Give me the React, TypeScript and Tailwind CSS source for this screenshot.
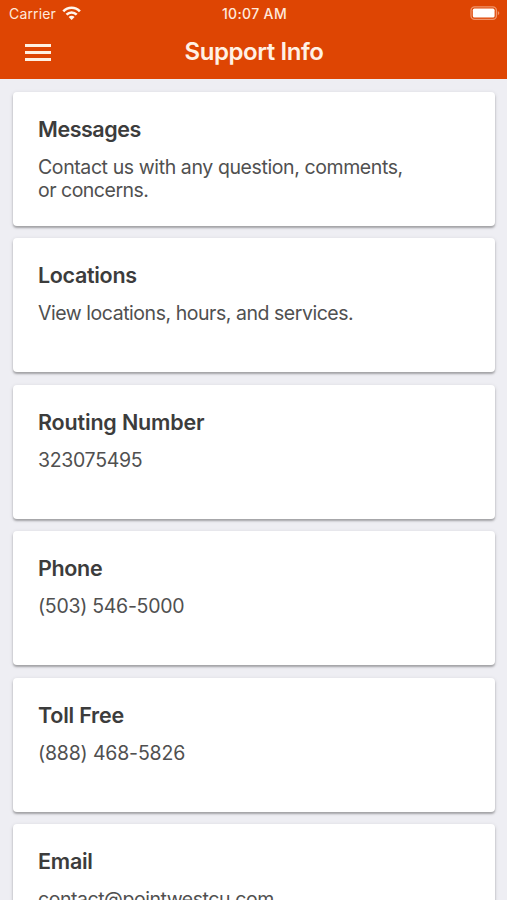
type Line = { text: string; className: string };
type Item = { title: string; titleClass: string; lines: Line[] };

const items: Item[] = [
  {
    title: "Messages",
    titleClass: "tracking-[-0.45px]",
    lines: [
      { text: "Contact us with any question, comments,", className: "tracking-[-0.4px]" },
      { text: "or concerns.", className: "tracking-[-0.5px]" },
    ],
  },
  { title: "Locations", titleClass: "tracking-[-0.32px]", lines: [{ text: "View locations, hours, and services.", className: "tracking-[-0.46px]" }] },
  { title: "Routing Number", titleClass: "tracking-[-0.17px]", lines: [{ text: "323075495", className: "tracking-[-0.32px]" }] },
  { title: "Phone", titleClass: "tracking-[-0.35px]", lines: [{ text: "(503) 546-5000", className: "tracking-[-0.28px]" }] },
  { title: "Toll Free", titleClass: "tracking-[-0.22px]", lines: [{ text: "(888) 468-5826", className: "tracking-[-0.17px]" }] },
  { title: "Email", titleClass: "tracking-[-0.25px]", lines: [{ text: "contact@pointwestcu.com", className: "tracking-[-0.46px]" }] },
];

function WifiIcon() {
  return (
    <svg width="20" height="16" viewBox="0 0 20 16" fill="none" stroke="#fff5ed" strokeWidth="2.6" className="-mt-px block">
      <path d="M1.3 6.4C5.9 1.5 13.3 1.5 17.9 6.4" />
      <path d="M4.5 9.7C7.5 6.7 11.7 6.7 14.7 9.7" />
      <path d="M9.6 15 6.6 12C8.2 10.4 11 10.4 12.6 12Z" fill="#fff5ed" stroke="none" />
    </svg>
  );
}

function BatteryIcon() {
  return (
    <svg width="31" height="16" viewBox="0 0 31 16" className="-mt-px block">
      <rect x="2" y="1.8" width="25.4" height="12.6" rx="3.6" fill="none" stroke="#f0946b" strokeWidth="1.3" />
      <rect x="3.8" y="3.6" width="21.8" height="9" rx="1.6" fill="#fff" />
      <path d="M28.8 6C30.8 6.8 30.8 9.4 28.8 10.2Z" fill="#f0946b" />
    </svg>
  );
}

export default function App() {
  return (
    <div className="flex h-[900px] w-[507px] flex-col overflow-hidden bg-[#eeeef3] font-['Inter','Liberation_Sans',sans-serif]">
      <header className="h-[79px] shrink-0 bg-[#de4503]">
        <div className="grid h-[26px] grid-cols-3 items-center pl-[9px] pr-[7px] text-[14px] text-[#ffe9dc]">
          <div className="flex items-center gap-[6px]">
            <span className="tracking-[0.15px]">Carrier</span>
            <WifiIcon />
          </div>
          <span className="text-center font-medium tracking-[0.35px]">10:07 AM</span>
          <div className="flex justify-end">
            <BatteryIcon />
          </div>
        </div>
        <div className="grid h-[51px] grid-cols-[100px_1fr_100px] items-center">
          <button aria-label="Menu" className="ml-[25px] mt-[2px] flex w-[26px] flex-col gap-[4px]">
            <span className="h-[3px] bg-[#fff1e2]" />
            <span className="h-[3px] bg-[#fff1e2]" />
            <span className="h-[3px] bg-[#fff1e2]" />
          </button>
          <h1 className="pl-px text-center text-[24px] font-semibold tracking-[-0.42px] text-[#fff1e5]">Support Info</h1>
        </div>
      </header>
      <main className="flex flex-col gap-[12.2px] pl-[13px] pr-[12px] pt-[12.6px]">
        {items.map((item) => (
          <section
            key={item.title}
            className="h-[134.3px] shrink-0 rounded-[4px] bg-white pl-[25px] pt-[23.2px] shadow-[0_2px_2px_rgba(0,0,0,0.26),0_1px_4px_rgba(0,0,0,0.12)]"
          >
            <h2 className={`text-[21.5px] font-semibold leading-[28px] text-[#3c3c3c] ${item.titleClass}`}>{item.title}</h2>
            <div className="mt-[13.2px] text-[19.5px] leading-[23px] text-[#505050]">
              {item.lines.map((line) => (
                <p key={line.text} className={`whitespace-nowrap ${line.className}`}>{line.text}</p>
              ))}
            </div>
          </section>
        ))}
      </main>
    </div>
  );
}
